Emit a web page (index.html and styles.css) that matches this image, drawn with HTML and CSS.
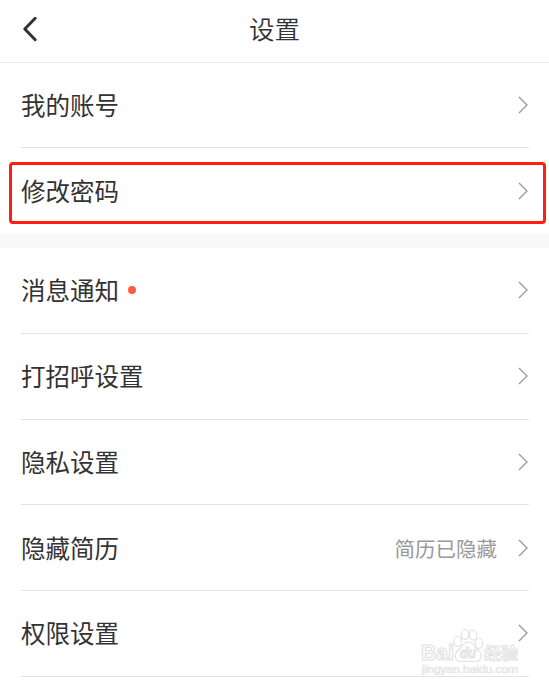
FILE: index.html
```html
<!DOCTYPE html>
<html lang="zh-CN">
<head>
  <meta charset="UTF-8" />
  <meta name="viewport" content="width=device-width, initial-scale=1.0"/>
  <title>设置</title>
  <link rel="stylesheet" href="styles.css">
</head>
<body>
  <header class="header">
    <svg class="back" viewBox="0 0 16 26"><path d="M13.2 2.3 L2.8 13 L13.2 23.7" /></svg>
    <h1>设置</h1>
  </header>

  <ul class="list">
    <li class="row">
      <span class="label">我的账号</span>
      <svg class="arrow" viewBox="0 0 10 18"><path d="M1 1 L9 9 L1 17" /></svg>
    </li>
    <li class="row marked">
      <span class="label">修改密码</span>
      <svg class="arrow" viewBox="0 0 10 18"><path d="M1 1 L9 9 L1 17" /></svg>
    </li>
  </ul>

  <ul class="list list_second">
    <li class="row">
      <span class="label">消息通知</span>
      <span class="dot"></span>
      <svg class="arrow" viewBox="0 0 10 18"><path d="M1 1 L9 9 L1 17" /></svg>
    </li>
    <li class="row">
      <span class="label">打招呼设置</span>
      <svg class="arrow" viewBox="0 0 10 18"><path d="M1 1 L9 9 L1 17" /></svg>
    </li>
    <li class="row">
      <span class="label">隐私设置</span>
      <svg class="arrow" viewBox="0 0 10 18"><path d="M1 1 L9 9 L1 17" /></svg>
    </li>
    <li class="row">
      <span class="label">隐藏简历</span>
      <span class="value">简历已隐藏</span>
      <svg class="arrow" viewBox="0 0 10 18"><path d="M1 1 L9 9 L1 17" /></svg>
    </li>
    <li class="row">
      <span class="label">权限设置</span>
      <svg class="arrow" viewBox="0 0 10 18"><path d="M1 1 L9 9 L1 17" /></svg>
    </li>
  </ul>

  <svg class="watermark" viewBox="0 0 104 52">
    <g class="paw">
      <ellipse cx="37.7" cy="16.5" rx="3.8" ry="5" />
      <ellipse cx="45" cy="9.5" rx="3.8" ry="5" />
      <ellipse cx="53" cy="10.200" rx="3.8" ry="5" />
      <ellipse cx="59" cy="18.500" rx="3.8" ry="5" />
      <path d="M48.5 17 C43 17 42 21.500 38.500 25 C34 29 34 36.500 41 36.500 C45 36.500 51 36 55 36.500 C62 36.500 63 29.500 58.500 25.500 C54.500 22 54 17 48.500 17 Z" />
    </g>
    <text class="mark_big" x="1" y="35" textLength="33" lengthAdjust="spacingAndGlyphs">Bai</text>
    <text class="mark_du" x="40" y="33" textLength="16" lengthAdjust="spacingAndGlyphs">du</text>
    <text class="mark_cn" x="64" y="34" textLength="34" lengthAdjust="spacingAndGlyphs">经验</text>
    <text class="mark_url" x="2" y="48" textLength="96" lengthAdjust="spacingAndGlyphs">jingyan.baidu.com</text>
  </svg>
</body>
</html>
```

FILE: styles.css
```css
* {
  box-sizing: border-box;
}

body {
  margin: 0;
  height: 688px;
  overflow: hidden;
  background-color: #fff;
  color: #333;
  font-family: "Noto Sans CJK SC", sans-serif;
}

.header {
  display: flex;
  align-items: center;
  height: 63px;
  padding: 0 22px 5px;
  border-bottom: 1px solid #ebebeb;
}

.header h1 {
  flex: 1;
  margin: -2px 16px 0 0;
  font-size: 25.5px;
  line-height: 36px;
  font-weight: 350;
  text-align: center;
}

.back {
  width: 16px;
  height: 26px;
  fill: none;
  stroke: #333;
  stroke-width: 3;
  stroke-linecap: round;
  stroke-linejoin: round;
}

.list {
  margin: 0;
  padding: 0 20px 0 21px;
  list-style: none;
}

.list_second {
  border-top: 15px solid #f7f9fa;
}

.row {
  position: relative;
  display: flex;
  align-items: center;
  height: 85px;
  padding-right: 1px;
  border-bottom: 1px solid #e4e4e4;
}

.list_second .row {
  height: 85.75px;
}

.row.marked {
  border-bottom: none;
}

/* red frame round the row */
.marked::after {
  content: "";
  position: absolute;
  box-sizing: border-box;
  top: 14px;
  left: -12px;
  right: -17px;
  height: 62px;
  border: 3px solid #ff1e12;
  border-radius: 4px;
}

.label {
  font-size: 24.5px;
  line-height: 36px;
}

.dot {
  width: 8px;
  height: 8px;
  margin-left: 9px;
  border-radius: 50%;
  background-color: #ff5b43;
}

.value {
  margin-left: auto;
  color: #999;
  font-size: 20.5px;
  line-height: 30px;
}

.arrow {
  width: 10px;
  height: 18px;
  margin-left: auto;
  fill: none;
  stroke: #999;
  stroke-width: 1.3;
}

.value + .arrow {
  margin-left: 21px;
}

.watermark {
  position: absolute;
  left: 420px;
  top: 625px;
  width: 104px;
  height: 52px;
  fill: #fff;
  stroke: #e2e2e2;
  stroke-width: 1.2;
  font-family: "Liberation Sans", sans-serif;
  font-weight: bold;
}

.mark_big {
  font-size: 22px;
}

.mark_du {
  font-size: 14px;
  font-style: italic;
}

.mark_cn {
  font-family: "Noto Sans CJK SC", sans-serif;
  font-size: 16px;
  stroke-width: 0.9;
}

.mark_url {
  font-size: 11px;
  font-weight: normal;
  fill: #f4f4f4;
  stroke: #e6e6e6;
  stroke-width: 0.7;
}
```
